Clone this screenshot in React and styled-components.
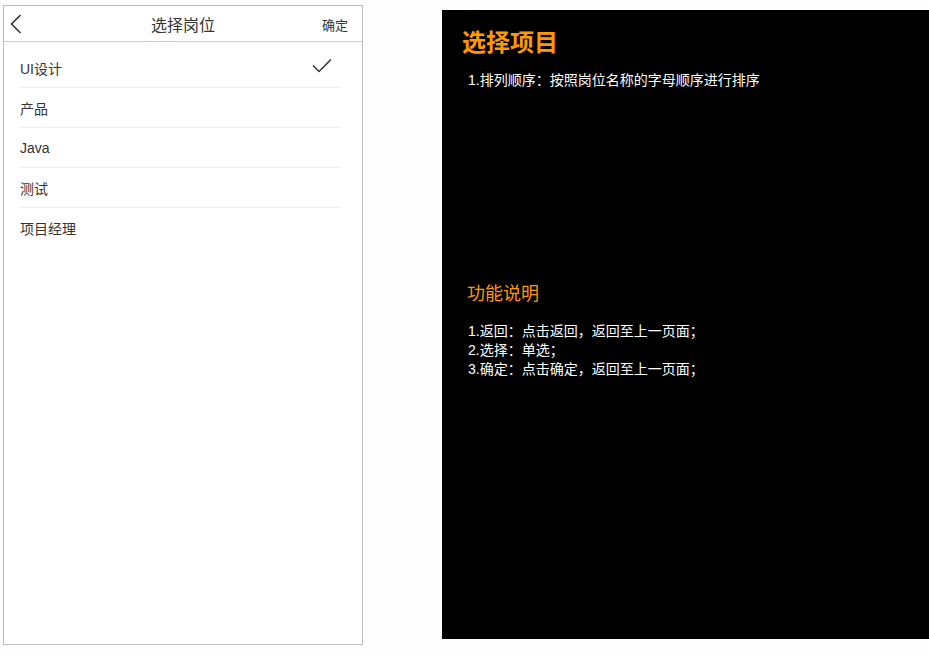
import React from 'react';
import styled, { createGlobalStyle } from 'styled-components';

const GlobalStyle = createGlobalStyle`
    body {
        margin: 0;
        background: #fdfdfd;
        font-family: Arial, "Liberation Sans", "Noto Sans CJK SC", sans-serif;
    }
`;

const positions = ['UI设计', '产品', 'Java', '测试', '项目经理'];

const App = () => {
    return (
        <Page>
            <GlobalStyle />
            <Phone>
                <Header>
                    <BackBtn aria-label="back">
                        <svg width="12" height="20" viewBox="0 0 12 20">
                            <path d="M10.5 1 L1.5 10 L10.5 19" fill="none" stroke="#333" strokeWidth="1.6" />
                        </svg>
                    </BackBtn>
                    <Title>选择岗位</Title>
                    <OkBtn>确定</OkBtn>
                </Header>
                <List>
                    {positions.map((p, i) => (
                        <Row key={p}>
                            <RowText>{p}</RowText>
                            {i === 0 && (
                                <svg width="20" height="15" viewBox="0 0 20 15">
                                    <path d="M1 7.5 L7 13.5 L19 1.5" fill="none" stroke="#333" strokeWidth="1.5" />
                                </svg>
                            )}
                        </Row>
                    ))}
                </List>
            </Phone>
            <Notes>
                <NotesTitle>选择项目</NotesTitle>
                <NoteLine>1.排列顺序：按照岗位名称的字母顺序进行排序</NoteLine>
                <SubTitle>功能说明</SubTitle>
                <NoteLine>1.返回：点击返回，返回至上一页面；</NoteLine>
                <NoteLine>2.选择：单选；</NoteLine>
                <NoteLine>3.确定：点击确定，返回至上一页面；</NoteLine>
            </Notes>
        </Page>
    );
};

export default App;

const Page = styled.div`
    display: flex;
    align-items: flex-start;
    padding: 5px 0 0 3px;
`;

const Phone = styled.div`
    width: 358px;
    height: 638px;
    border: 1px solid #bcbcbc;
    background: #fff;
    display: flex;
    flex-direction: column;
`;

const Header = styled.div`
    height: 35px;
    border-bottom: 1px solid #c8c8c8;
    display: flex;
    align-items: center;
    justify-content: space-between;
    padding: 0 14px 0 6px;
`;

const BackBtn = styled.div`
    width: 22px;
    display: flex;
    align-items: center;
    padding-top: 1px;
`;

const Title = styled.div`
    font-size: 16px;
    color: #333;
    margin-left: 12px;
`;

const OkBtn = styled.div`
    font-size: 13px;
    color: #333;
    padding-top: 2px;
`;

const List = styled.div`
    padding-top: 6px;
`;

const Row = styled.div`
    height: 39px;
    margin: 0 22px 0 16px;
    border-bottom: 1px solid #eeeeee;
    display: flex;
    align-items: center;
    justify-content: space-between;
    padding-right: 8px;
    &:last-child {
        border-bottom: none;
    }
    svg {
        margin-top: -4px;
    }
`;

const RowText = styled.span`
    font-size: 14px;
    color: #333;
`;

const Notes = styled.div`
    margin: 5px 0 0 79px;
    width: 487px;
    height: 629px;
    background: #000;
    padding: 18px 20px 0 20px;
    box-sizing: border-box;
`;

const NotesTitle = styled.div`
    font-size: 24px;
    font-weight: bold;
    color: #ff9900;
    line-height: 30px;
    margin-bottom: 13px;
`;

const SubTitle = styled.div`
    font-size: 18px;
    color: #ff9900;
    line-height: 24px;
    margin: 192px 0 16px 5px;
`;

const NoteLine = styled.div`
    font-size: 14px;
    color: #fff;
    line-height: 19px;
    padding-left: 6px;
`;
